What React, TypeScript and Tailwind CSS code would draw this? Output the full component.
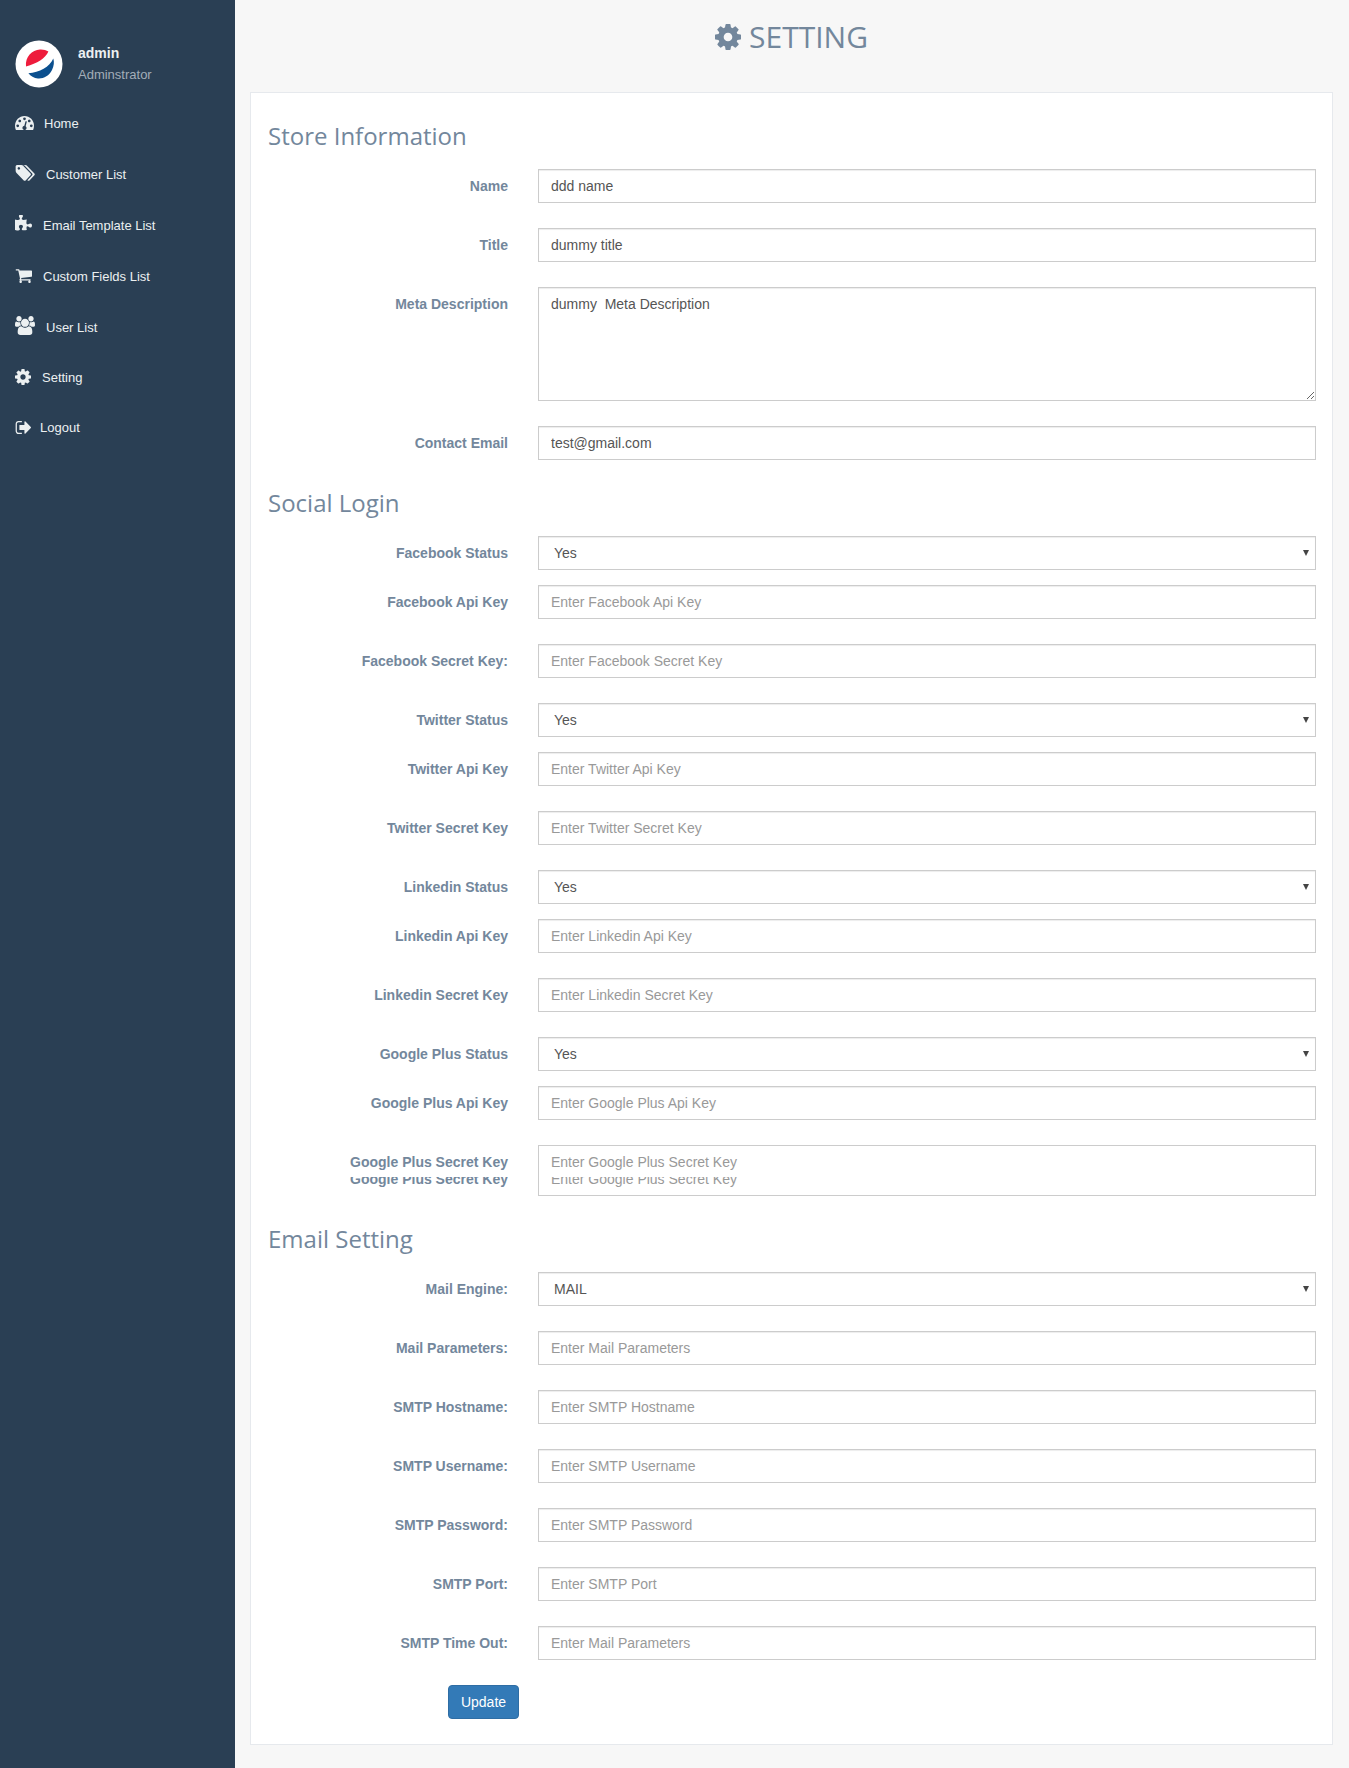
const icons = {
  dashboard: {
    box: "0 256 1792 1280",
    d: "M384 1152q0-53-37.500-90.500t-90.500-37.500-90.500 37.500-37.500 90.500 37.500 90.500 90.500 37.500 90.500-37.500 37.500-90.500zm192-448q0-53-37.500-90.500t-90.500-37.500-90.500 37.500-37.500 90.500 37.500 90.500 90.500 37.500 90.500-37.500 37.500-90.500zm428 481l101-382q6-26-7.500-48.500t-38.500-29.500-48 6.500-30 39.500l-101 382q-60 5-107 43.500t-63 98.500q-20 77 20 146t117 89 146-20 89-117q16-60-6-117t-72-91zm660-33q0-53-37.500-90.500t-90.500-37.500-90.500 37.500-37.500 90.500 37.500 90.500 90.500 37.500 90.500-37.500 37.500-90.500zm-640-640q0-53-37.500-90.500t-90.500-37.500-90.500 37.500-37.500 90.500 37.500 90.500 90.500 37.500 90.500-37.500 37.500-90.500zm448 192q0-53-37.500-90.500t-90.500-37.500-90.500 37.500-37.500 90.500 37.500 90.500 90.500 37.500 90.500-37.500 37.500-90.500zm320 448q0 261-141 483-19 29-54 29h-1402q-35 0-54-29-141-221-141-483 0-182 71-348t191-286 286-191 348-71 348 71 286 191 191 286 71 348z",
  },
  tags: {
    box: "0 128 1984 1536",
    d: "M512 448q0-53-37.500-90.500t-90.500-37.500-90.500 37.500-37.500 90.500 37.500 90.500 90.500 37.500 90.500-37.500 37.500-90.500zm1067 576q0 53-37 90l-491 492q-39 37-91 37-53 0-90-37l-715-716q-38-37-64.500-101t-26.500-117v-416q0-52 38-90t90-38h416q53 0 117 26.500t102 64.500l715 714q37 39 37 91zm384 0q0 53-37 90l-491 492q-39 37-91 37-36 0-59-14t-53-45l470-470q37-37 37-90 0-52-37-91l-715-714q-38-38-102-64.500t-117-26.500h224q53 0 117 26.500t102 64.500l715 714q37 39 37 91z",
  },
  puzzle: {
    box: "64 64 1664 1664",
    d: "M1728 1098q0 81-44.500 135t-123.500 54q-41 0-77.500-17.500t-59-38-56.500-38-71-17.500q-110 0-110 124 0 39 16 115t15 115v5q-22 0-33 1-34 3-97.500 11.500t-115.500 13.500-98 5q-61 0-103-26.500t-42-83.500q0-37 17.500-71t38-56.500 38-59 17.500-77.500q0-79-54-123.500t-135-44.500q-84 0-143 45.500t-59 127.500q0 43 15 83t33.500 64.500 33.500 53 15 50.500q0 45-46 89-37 35-117 35-95 0-245-24-9-2-27.500-4t-27.500-4l-13-2q-1 0-3-1-2 0-2-1v-1024q2 1 17.500 3.500t34 5 21.500 3.500q150 24 245 24 80 0 117-35 46-44 46-89 0-22-15-50.500t-33.500-53-33.500-64.500-15-83q0-82 59-127.500t144-45.500q80 0 134 44.500t54 123.500q0 41-17.500 77.500t-38 59-38 56.500-17.500 71q0 57 42 83.500t103 26.500q64 0 180-15t163-17v2q-1 2-3.500 17.500t-5 34-3.500 21.500q-24 150-24 245 0 80 35 117 44 46 89 46 22 0 50.500-15t53-33.500 64.500-33.500 83-15q82 0 127.500 59t45.500 143z",
  },
  cart: {
    box: "0 128 1728 1536",
    d: "M704 1536q0 52-38 90t-90 38-90-38-38-90 38-90 90-38 90 38 38 90zm896 0q0 52-38 90t-90 38-90-38-38-90 38-90 90-38 90 38 38 90zm128-1088v512q0 24-16.500 42.500t-40.500 21.500l-1044 122q13 60 13 70 0 16-24 64h920q26 0 45 19t19 45-19 45-45 19h-1024q-26 0-45-19t-19-45q0-11 8-31.500t16-36 21.500-40 15.500-29.500l-177-823h-204q-26 0-45-19t-19-45 19-45 45-19h256q16 0 28.500 6.500t19.500 15.500 13 24.500 8 26 5.500 29.500 4.500 26h1201q26 0 45 19t19 45z",
  },
  users: {
    box: "0 0 1920 1792",
    d: "M593 896q-162 5-265 128h-134q-82 0-138-40.500t-56-118.500q0-353 124-353 6 0 43.500 21t97.500 42.500 119 21.500q67 0 133-23-5 37-5 66 0 139 81 256zm1071 637q0 120-73 189.500t-194 69.500h-874q-121 0-194-69.500t-73-189.500q0-53 3.500-103.500t14-109 26.500-108.500 43-97.500 62-81 85.500-53.500 111.500-20q10 0 43 21.500t73 48 107 48 135 21.500 135-21.500 107-48 73-48 43-21.500q61 0 111.500 20t85.500 53.500 62 81 43 97.500 26.500 108.500 14 109 3.500 103.500zm-1024-1277q0 106-75 181t-181 75-181-75-75-181 75-181 181-75 181 75 75 181zm704 384q0 159-112.500 271.500t-271.500 112.500-271.500-112.500-112.500-271.500 112.500-271.500 271.500-112.500 271.500 112.500 112.500 271.500zm576 225q0 78-56 118.500t-138 40.500h-134q-103-123-265-128 81-117 81-256 0-29-5-66 66 23 133 23 59 0 119-21.500t97.500-42.500 43.500-21q124 0 124 353zm-128-609q0 106-75 181t-181 75-181-75-75-181 75-181 181-75 181 75 75 181z",
  },
  cog: {
    box: "128 128 1536 1536",
    d: "M1152 896q0-106-75-181t-181-75-181 75-75 181 75 181 181 75 181-75 75-181zm512-109v222q0 12-8 23t-20 13l-185 28q-19 54-39 91 35 50 107 138 10 12 10 25t-9 23q-27 37-99 108t-94 71q-12 0-26-9l-138-108q-44 23-91 38-16 136-29 186-7 28-36 28h-222q-14 0-24.500-8.500t-11.500-21.500l-28-184q-49-16-90-37l-141 107q-10 9-25 9-14 0-25-11-126-114-165-168-7-10-7-23 0-12 8-23 15-21 51-66.500t54-70.500q-27-50-41-99l-183-27q-13-2-21-12.500t-8-23.500v-222q0-12 8-23t19-13l186-28q14-46 39-92-40-57-107-138-10-12-10-24 0-10 9-23 26-36 98.500-107.500t94.500-71.500q13 0 26 10l138 107q44-23 91-38 16-136 29-186 7-28 36-28h222q14 0 24.500 8.500t11.500 21.500l28 184q49 16 90 37l142-107q9-9 24-9 13 0 25 10 129 119 165 170 7 8 7 22 0 12-8 23-15 21-51 66.500t-54 70.500q26 50 41 98l183 28q13 2 21 12.500t8 23.500z",
  },
  signout: {
    box: "0 256 1632 1280",
    d: "M704 1440q0 4 1 20t.5 26.500-3 23.500-10 19.500-20.500 6.500h-320q-119 0-203.500-84.500t-84.500-203.500v-704q0-119 84.500-203.500t203.500-84.500h320q13 0 22.500 9.500t9.500 22.500q0 4 1 20t.5 26.500-3 23.500-10 19.500-20.500 6.500h-320q-66 0-113 47t-47 113v704q0 66 47 113t113 47h312l11.500 1 11.500 3 8 5.500 7 9 2 13.500zm928-544q0 26-19 45l-544 544q-19 19-45 19t-45-19-19-45v-288h-448q-26 0-45-19t-19-45v-384q0-26 19-45t45-19h448v-288q0-26 19-45t45-19 45 19l544 544q19 19 19 45z",
  },
};

function Icon({ name, className }: { name: keyof typeof icons; className?: string }) {
  return (
    <svg viewBox={icons[name].box} fill="currentColor" className={className} preserveAspectRatio="none">
      <path d={icons[name].d} />
    </svg>
  );
}

const navItems: { label: string; icon: keyof typeof icons; iconClass: string; textClass: string; h: string }[] = [
  { label: "Home", icon: "dashboard", iconClass: "h-[14px] w-[19px] mb-[1px]", textClass: "ml-[10px]", h: "h-[51px]" },
  { label: "Customer List", icon: "tags", iconClass: "h-[16px] w-[20px] mb-[4px]", textClass: "ml-[11px]", h: "h-[51px]" },
  { label: "Email Template List", icon: "puzzle", iconClass: "h-[17px] w-[17px] mb-[5px]", textClass: "ml-[11px]", h: "h-[51px]" },
  { label: "Custom Fields List", icon: "cart", iconClass: "h-[15px] w-[17px] mb-[3px]", textClass: "ml-[11px]", h: "h-[51px]" },
  { label: "User List", icon: "users", iconClass: "h-[19px] w-[20px] mb-[4px]", textClass: "ml-[11px]", h: "h-[51px]" },
  { label: "Setting", icon: "cog", iconClass: "h-[16px] w-[16px] mb-[3px]", textClass: "ml-[11px]", h: "h-[50px]" },
  { label: "Logout", icon: "signout", iconClass: "h-[13px] w-[16px] mb-[1px]", textClass: "ml-[9px]", h: "h-[50px]" },
];

const labelClass = "w-[240px] shrink-0 pt-[8px] text-right text-[14px] leading-[18px] font-bold text-[#73879c]";
const inputClass =
  "h-[34px] w-full rounded-none border border-[#ccc] bg-white px-[12px] text-[14px] text-[#555] shadow-[inset_0_1px_1px_rgba(0,0,0,0.075)] outline-none placeholder:text-[#999]";

function PepsiLogo() {
  return (
    <svg viewBox="0 0 48 48" className="h-[48px] w-[48px]">
      <circle cx="24" cy="24" r="23.5" fill="#fff" />
      <path d="M11 26.5C10 17 17 10 25 9.600c3.200-.2 6.200.6 8.400 2-3 6.800-11.200 12-22.400 14.900z" fill="#ee1c3c" />
      <path d="M38.300 18.600C39.400 22 39 26 37 30c-3 6-8.500 8.800-14 8.400-4-.3-7.400-2.200-9.600-5.200 11-.7 21.300-6 24.900-14.600z" fill="#0b4f8e" />
    </svg>
  );
}

function TextRow({ label, value, placeholder }: { label: string; value?: string; placeholder?: string }) {
  return (
    <div className="mb-[25px] flex">
      <label className={labelClass}>{label}</label>
      <input className={`ml-[30px] flex-1 ${inputClass}`} defaultValue={value} placeholder={placeholder} />
    </div>
  );
}

function SelectRow({ label, value, mb = "mb-[15px]" }: { label: string; value: string; mb?: string }) {
  return (
    <div className={`flex ${mb}`}>
      <label className={labelClass}>{label}</label>
      <div className="relative ml-[30px] flex-1">
        <select className={`appearance-none pl-[15px] ${inputClass}`} defaultValue={value}>
          <option>{value}</option>
        </select>
        <span className="absolute top-[14px] right-[7px] h-0 w-0 border-x-[3px] border-t-[6px] border-x-transparent border-t-[#444]" />
      </div>
    </div>
  );
}

function SectionTitle({ children }: { children: string }) {
  return <h3 className="mt-[30px] mb-[20px] font-['Open_Sans',sans-serif] text-[24px] leading-[26px] font-normal text-[#73879c]">{children}</h3>;
}

export default function App() {
  return (
    <div className="flex min-h-[1768px] bg-[#f7f7f7] font-['Liberation_Sans',Arial,sans-serif]">
      <aside className="w-[235px] shrink-0 bg-[#2a3f54]">
        <div className="flex items-center pt-[40px] pl-[15px]">
          <PepsiLogo />
          <div className="ml-[15px]">
            <p className="mt-[-1px] text-[14px] leading-[20px] font-bold text-[#ecf0f1]">admin</p>
            <p className="mt-[2px] text-[13px] leading-[20px] text-[#a3adb8]">Adminstrator</p>
          </div>
        </div>
        <nav className="mt-[10px] pl-[15px]">
          {navItems.map((item) => (
            <a key={item.label} href="#" className={`flex items-center text-[13px] text-[#ecf0f1] ${item.h}`}>
              <Icon name={item.icon} className={item.iconClass} />
              <span className={item.textClass}>{item.label}</span>
            </a>
          ))}
        </nav>
      </aside>

      <main className="flex-1 pr-[16px] pl-[15px]">
        <h1 className="flex h-[92px] items-start justify-center pt-[16px] font-['Open_Sans',sans-serif] text-[30px] leading-[42px] font-normal text-[#73879c]">
          <Icon name="cog" className="mt-[8px] mr-[8px] h-[26px] w-[26px]" />
          SETTING
        </h1>

        <form className="border border-[#e6e9ed] bg-white pt-[30px] pr-[16px] pb-[25px] pl-[17px]">
          <h3 className="mb-[20px] font-['Open_Sans',sans-serif] text-[24px] leading-[26px] font-normal text-[#73879c]">Store Information</h3>
          <TextRow label="Name" value="ddd name" />
          <TextRow label="Title" value="dummy title" />
          <div className="mb-[25px] flex">
            <label className={labelClass}>Meta Description</label>
            <textarea
              className="ml-[30px] h-[114px] flex-1 rounded-none border border-[#ccc] bg-white px-[12px] py-[6px] text-[14px] leading-[20px] text-[#555] shadow-[inset_0_1px_1px_rgba(0,0,0,0.075)] outline-none"
              defaultValue="dummy  Meta Description"
            />
          </div>
          <TextRow label="Contact Email" value="test@gmail.com" />

          <SectionTitle>Social Login</SectionTitle>
          <SelectRow label="Facebook Status" value="Yes" />
          <TextRow label="Facebook Api Key" placeholder="Enter Facebook Api Key" />
          <TextRow label="Facebook Secret Key:" placeholder="Enter Facebook Secret Key" />
          <SelectRow label="Twitter Status" value="Yes" />
          <TextRow label="Twitter Api Key" placeholder="Enter Twitter Api Key" />
          <TextRow label="Twitter Secret Key" placeholder="Enter Twitter Secret Key" />
          <SelectRow label="Linkedin Status" value="Yes" />
          <TextRow label="Linkedin Api Key" placeholder="Enter Linkedin Api Key" />
          <TextRow label="Linkedin Secret Key" placeholder="Enter Linkedin Secret Key" />
          <SelectRow label="Google Plus Status" value="Yes" />
          <TextRow label="Google Plus Api Key" placeholder="Enter Google Plus Api Key" />

          {/* the original has this row doubled, the second copy is cut off at the top */}
          <div className="flex h-[51px]">
            <div className="w-[240px] shrink-0 pt-[8px] text-right text-[14px] leading-[18px] font-bold text-[#73879c]">
              <div>Google Plus Secret Key</div>
              <div className="mt-[6px] h-[11px] overflow-hidden">
                <div className="mt-[-7px]">Google Plus Secret Key</div>
              </div>
            </div>
            <div className="ml-[30px] flex-1 border border-[#ccc] bg-white px-[12px] pt-[7px] text-[14px] leading-[18px] text-[#999]">
              <div>Enter Google Plus Secret Key</div>
              <div className="mt-[6px] h-[11px] overflow-hidden">
                <div className="mt-[-7px]">Enter Google Plus Secret Key</div>
              </div>
            </div>
          </div>

          <SectionTitle>Email Setting</SectionTitle>
          <SelectRow label="Mail Engine:" value="MAIL" mb="mb-[25px]" />
          <TextRow label="Mail Parameters:" placeholder="Enter Mail Parameters" />
          <TextRow label="SMTP Hostname:" placeholder="Enter SMTP Hostname" />
          <TextRow label="SMTP Username:" placeholder="Enter SMTP Username" />
          <TextRow label="SMTP Password:" placeholder="Enter SMTP Password" />
          <TextRow label="SMTP Port:" placeholder="Enter SMTP Port" />
          <TextRow label="SMTP Time Out:" placeholder="Enter Mail Parameters" />

          <button
            type="button"
            className="ml-[180px] h-[34px] w-[71px] rounded-[4px] border border-[#2e6da4] bg-[#337ab7] text-[14px] text-white"
          >
            Update
          </button>
        </form>
      </main>
    </div>
  );
}
